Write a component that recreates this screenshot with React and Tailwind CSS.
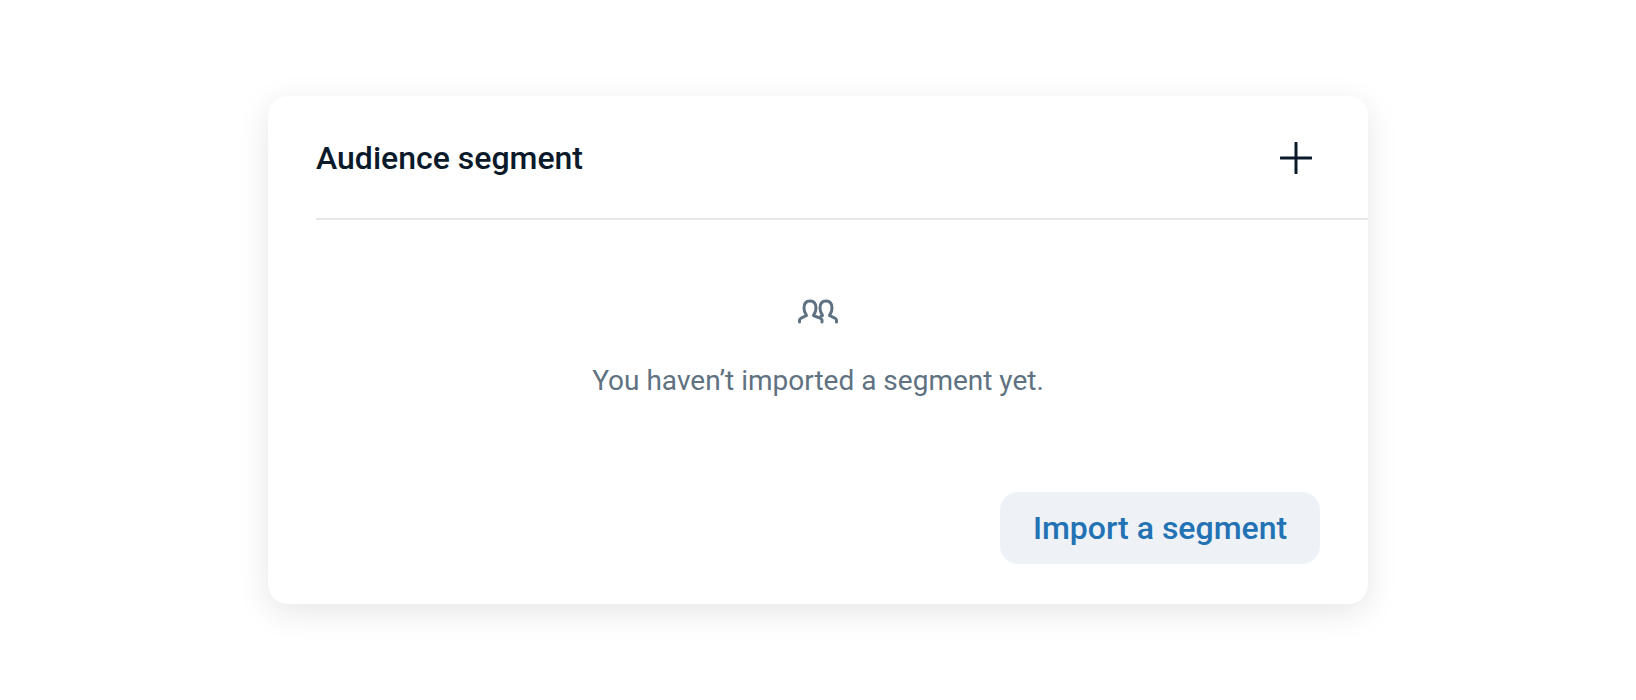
// App.jsx
const PeopleIcon = () => (
    <svg width="40" height="26" viewBox="0 0 40 26" fill="none" stroke="#5f7281" strokeWidth="3" strokeLinecap="round" strokeLinejoin="round">
        <path d="M1.500 24v-2c0-2 4.500-3 7-4.500C7 15.500 6 13 6 10c0-5 2.500-7 6-7s6 2 6 7c0 3-1 5.500-2.500 7.500 2.500 1.500 8.500 2.500 8.500 4.500v2" />
        <path d="M38.500 24v-2c0-2-4.500-3-7-4.500 1.500-2 2.500-4.500 2.500-7.500 0-5-2.500-7-6-7s-6 2-6 7c0 3 1 5.500 2.500 7.500L22 19" />
    </svg>
);

const App = () => {
    return (
        <div className="min-h-[700px] bg-white flex justify-center pt-[96px] font-['Roboto',sans-serif]">
            <div className="w-[1100px] h-[508px] bg-white rounded-[20px] shadow-[0_8px_32px_rgba(0,0,0,0.1)] pl-[48px] flex flex-col">
                <div className="h-[124px] pt-[2px] flex items-center justify-between border-b-2 border-[#e5e7eb] pr-[56px] shrink-0">
                    <h2 className="text-[32px] font-medium text-[#0b1a2b]">Audience segment</h2>
                    <svg width="32" height="32" viewBox="0 0 32 32" fill="none" stroke="#0b1a2b" strokeWidth="3" strokeLinecap="round">
                        <path d="M16 1v30M1 16h30" />
                    </svg>
                </div>
                <div className="flex flex-col items-center pr-[48px] pt-[78px]">
                    <PeopleIcon />
                    <p className="mt-[36px] text-[28px] text-[#5f7281]">You haven’t imported a segment yet.</p>
                </div>
                <div className="mt-auto mb-[40px] mr-[48px] flex justify-end">
                    <button className="w-[320px] h-[72px] rounded-[18px] bg-[#eef1f6] text-[32px] font-medium text-[#2272b4]">Import a segment</button>
                </div>
            </div>
        </div>
    );
};

export default App;
